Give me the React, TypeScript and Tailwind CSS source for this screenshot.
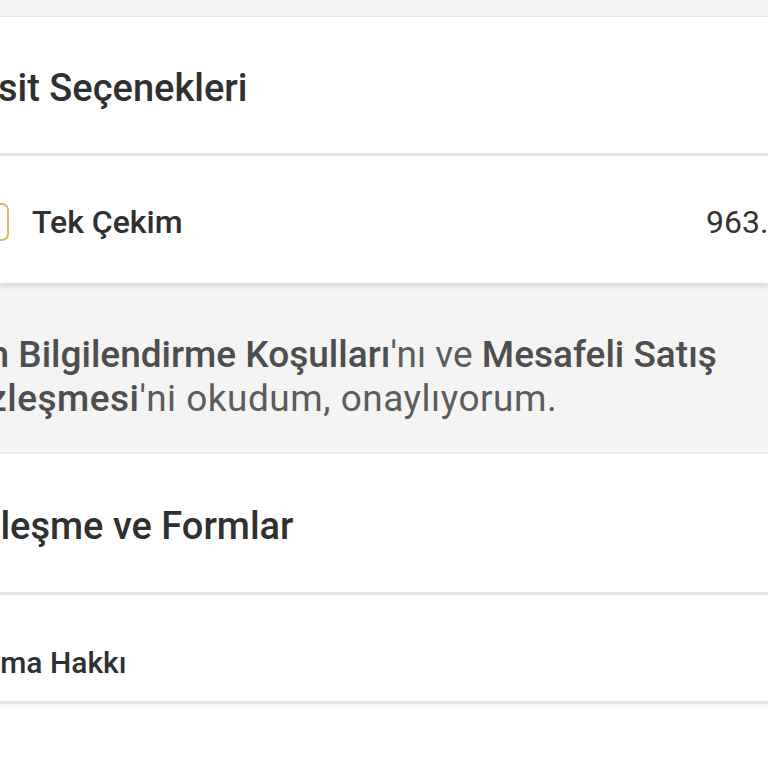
import React from 'react';

const font = { fontFamily: 'Roboto, "Noto Sans", Arial, sans-serif' };

export default function App() {
  return (
    <div
      className="w-[768px] h-[768px] overflow-hidden bg-[#f2f2f2] text-[#303030]"
      style={font}
    >
      {/* top gap */}
      <div className="h-[17px] bg-[#f2f2f2] border-b border-[#e6e6e6]" />

      {/* Taksit Seçenekleri */}
      <div className="h-[139px] bg-white border-b-[3px] border-[#e3e3e3] flex items-center pt-[5px]">
        <h2 className="-ml-[63px] whitespace-nowrap text-[38px] leading-none font-medium">
          Taksit Seçenekleri
        </h2>
      </div>

      {/* Tek Çekim */}
      <div className="h-[127px] bg-white flex items-center justify-between pt-[4px] shadow-[0_3px_5px_rgba(0,0,0,0.12)] relative">
        <div className="flex items-center gap-[23px]">
          <span className="-ml-[29px] w-[38px] h-[38px] rounded-[7px] border-2 border-[#e2b66c] bg-white" />
          <span className="whitespace-nowrap text-[32px] leading-none font-medium">Tek Çekim</span>
        </div>
        <span className="-mr-[80px] whitespace-nowrap text-[32px] leading-none text-[#333]">
          963.00 TL
        </span>
      </div>

      {/* onay */}
      <div className="h-[171px] bg-[#f4f4f4] border-b-2 border-[#ebebeb] pt-[50px]">
        <p className="-ml-[37px] whitespace-nowrap text-[37px] leading-[44px] text-[#5c5c5c]">
          <span className="font-medium text-[#4e4e4e]">Ön Bilgilendirme Koşulları</span>'nı ve{' '}
          <span className="font-medium text-[#4e4e4e]">Mesafeli Satış</span>
          <br />
          <span className="-ml-[19px] tracking-[0.5px]">
            <span className="font-medium text-[#4e4e4e]">Sözleşmesi</span>'ni okudum, onaylıyorum.
          </span>
        </p>
      </div>

      {/* Sözleşme ve Formlar */}
      <div className="h-[141px] bg-white border-b-[3px] border-[#e3e3e3] flex items-center pt-[6px]">
        <h2 className="-ml-[63px] whitespace-nowrap text-[38px] leading-none font-medium">
          Sözleşme ve Formlar
        </h2>
      </div>

      {/* Cayma Hakkı */}
      <div className="h-[109px] bg-white border-b-[3px] border-[#e3e3e3] flex items-center pt-[30px] shadow-[0_3px_4px_rgba(0,0,0,0.06)] relative">
        <span className="-ml-[50px] whitespace-nowrap text-[30px] leading-none font-medium">Cayma Hakkı</span>
      </div>

      {/* next row */}
      <div className="h-[140px] bg-white flex items-start pt-[66px]">
        <span className="-ml-[55px] whitespace-nowrap text-[30px] leading-none font-medium">
          Gizlilik ve İade Koşulları
        </span>
      </div>
    </div>
  );
}
